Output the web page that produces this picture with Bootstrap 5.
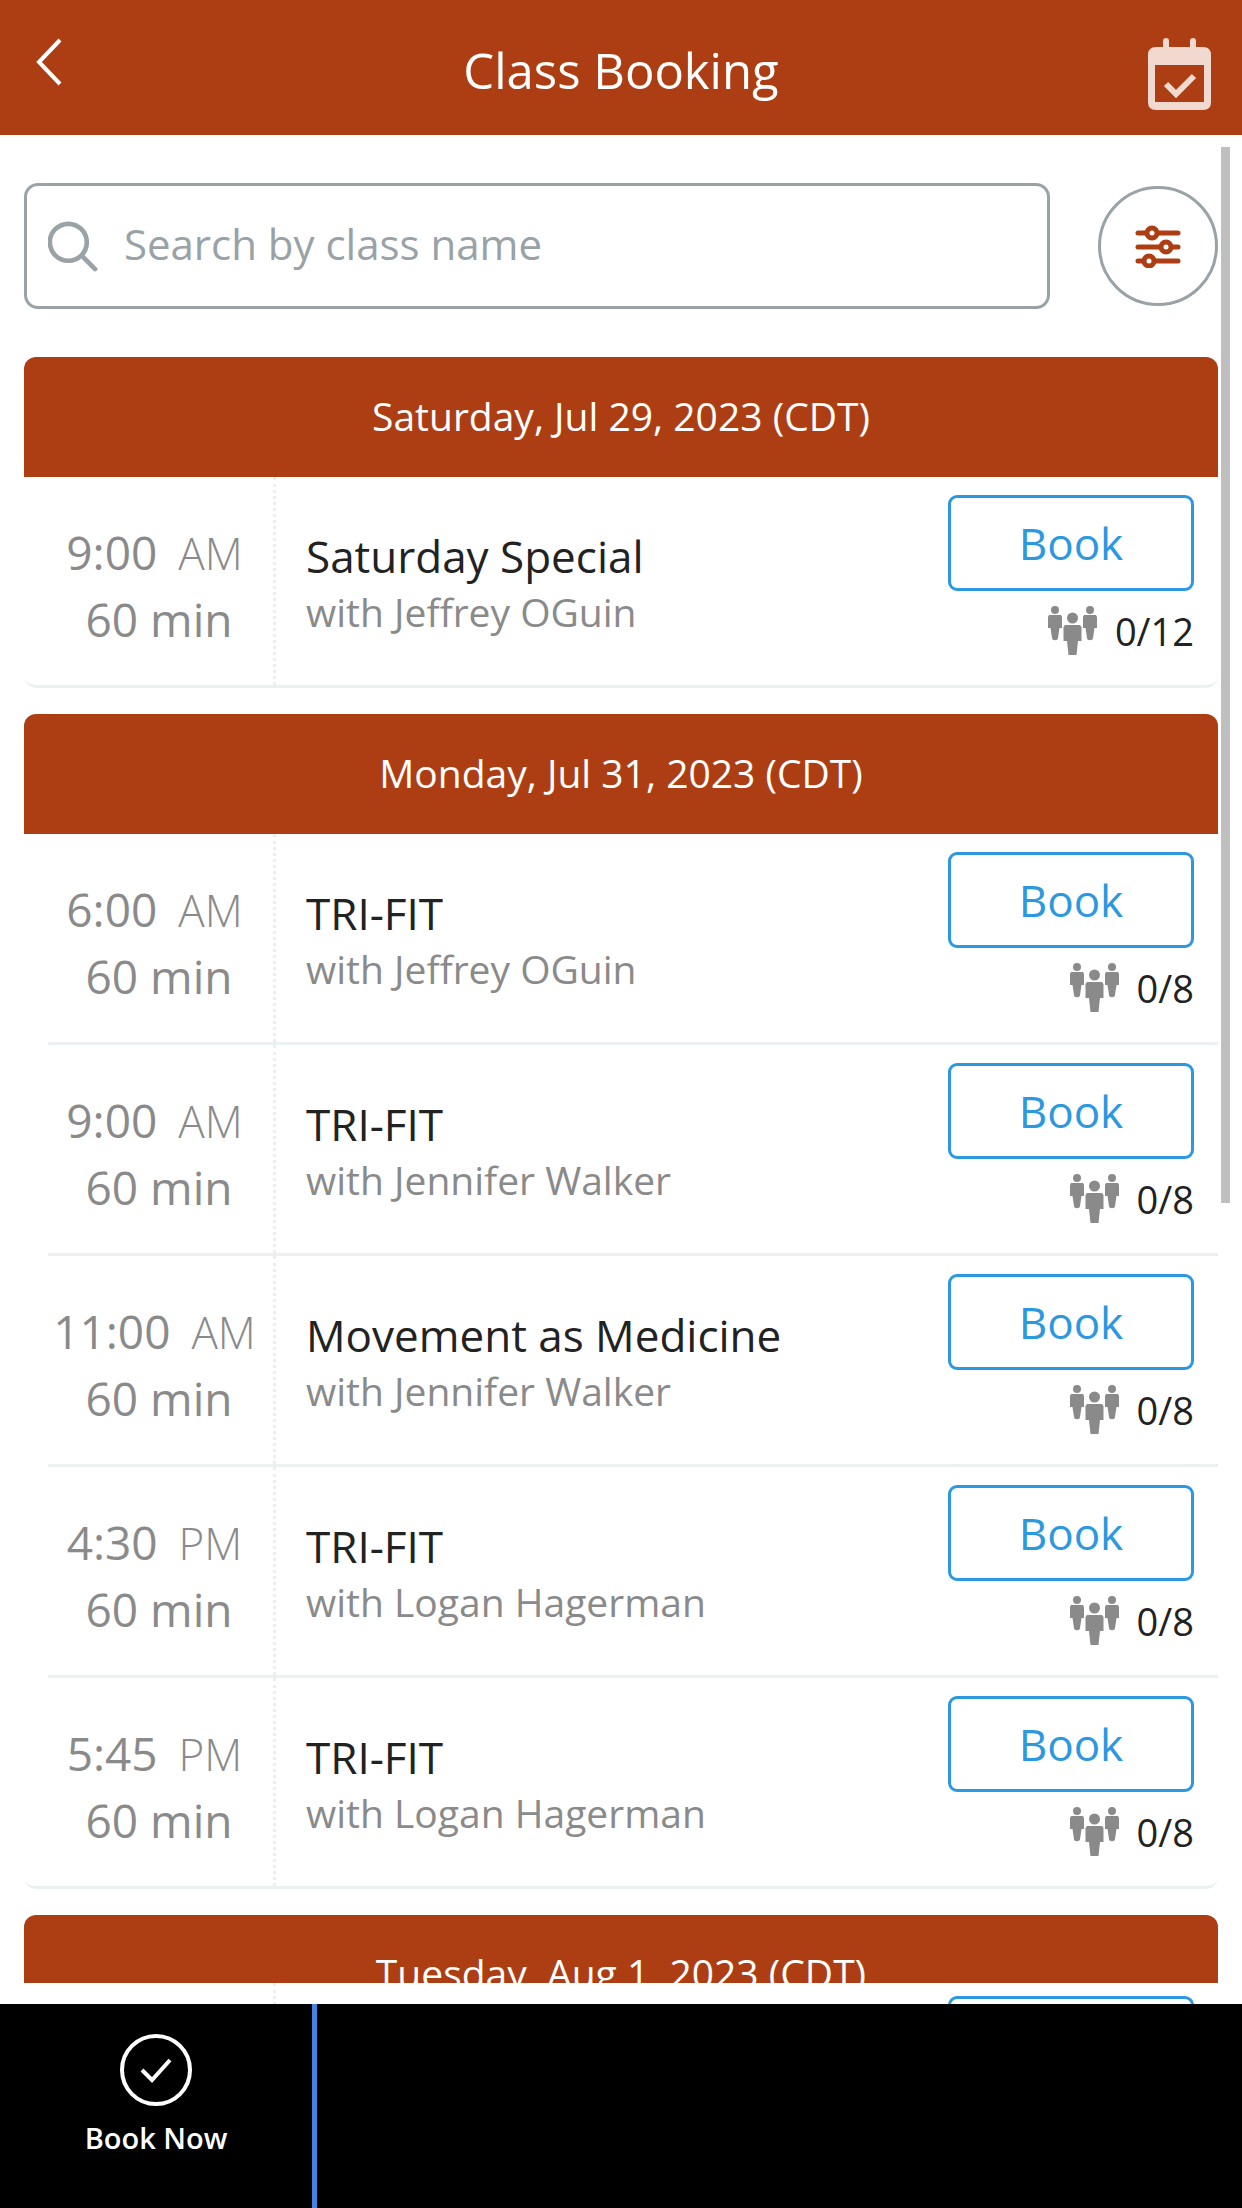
<!DOCTYPE html>
<html lang="en">
<head>
<meta charset="utf-8">
<meta name="viewport" content="width=device-width, initial-scale=1">
<title>Class Booking</title>
<link href="https://cdn.jsdelivr.net/npm/bootstrap@5.3.0/dist/css/bootstrap.min.css" rel="stylesheet">
<style>
  :root { --brand: #ad3e14; --slate: #98a2a7; --line: #ebf0f0; --sky: #2b98e0; }
  body { font-family: "Open Sans", sans-serif; color: #222; }
  svg { display: block; }
  .topbar { height: 135px; background: var(--brand); padding: 4px 30px 0; }
  .topbar h1 { font-size: 49px; line-height: 64px; font-weight: 400; }
  .side { width: 64px; height: 76px; margin-top: 8px; }
  .schedule { padding: 48px 24px 0; }
  .searchbar { gap: 48px; margin-bottom: 48px; }
  .searchbox { height: 126px; border: 3px solid var(--slate); border-radius: 14px; padding-left: 21px; gap: 26px; }
  .searchbox .form-control { font-size: 42px; line-height: 56px; font-weight: 500; color: #444; margin-bottom: 4px; }
  .searchbox .form-control::placeholder { color: var(--slate); opacity: 1; }
  .searchbox .form-control:focus { box-shadow: none; }
  .filter { width: 120px; height: 120px; border: 3px solid var(--slate); background: #fff; }
  .day { margin-bottom: 26px; border-radius: 12px; overflow: hidden; }
  .day h2 { height: 120px; background: var(--brand); font-size: 39px; line-height: 54px; font-weight: 400; padding-bottom: 2px; }
  .slot-item { height: 211px; padding-left: 24px; }
  .slot { border-bottom: 3px solid var(--line); height: 100%; }
  .slot-item:last-child { padding-left: 0; border-bottom: 3px solid var(--line); border-radius: 0 0 12px 12px; }
  .slot-item:last-child .slot { border-bottom: 0; padding-left: 24px; }
  .when { width: 228px; padding: 8px 12px 0 0; border-right: 3px dotted #eceeee; color: #8a8a8a; font-size: 46px; line-height: 66px; }
  .when .ampm { font-size: 44px; font-weight: 300; margin-left: 9px; }
  .length { padding-left: 9px; }
  .what { padding-left: 30px; padding-top: 3px; }
  .what h3 { font-size: 44px; line-height: 58px; font-weight: 400; }
  .what p { font-size: 39px; line-height: 54px; color: #8a8a8a; }
  .seats { width: 246px; margin-right: 24px; padding-top: 18px; }
  .btn-book { height: 96px; border: 3px solid var(--sky); border-radius: 9px; color: var(--sky); font-size: 44px; line-height: 60px; background: #fff; }
  .taken { gap: 18px; margin-top: 12px; font-size: 38px; line-height: 56px; }
  .day.partial h2 { height: 68px; padding-top: 31px; overflow: hidden; }
  .day.partial .seats { padding-top: 13px; }
  .thumb { top: 12px; right: 12px; width: 9px; height: 56.5%; background: #bfbfbf; }
  .tabs { height: 204px; background: #000; }
  .tab-item { width: 317px; border-right: 5px solid #4285dc; font-size: 29px; line-height: 38px; font-weight: 600; padding-top: 29px; gap: 12px; }
</style>
<script src="https://cdn.jsdelivr.net/npm/bootstrap@5.3.0/dist/js/bootstrap.bundle.min.js"></script>
</head>
<body class="bg-white">
<svg class="d-none" aria-hidden="true">
  <symbol id="people" viewBox="0 0 49 50">
    <g fill="#8a8a8a">
      <circle cx="7" cy="4" r="4"/><path d="M1 9h12l1 2v11h-2.500l-1.500 10c0 3-6 3-6 0L2.500 22H0V11z"/>
      <circle cx="42" cy="4" r="4"/><path d="M36 9h12l1 2v11h-2.500l-1.500 10c0 3-6 3-6 0l-1.500-10H35V11z"/>
      <circle cx="24.500" cy="12" r="5.500"/><path d="M17 19h15l1.500 2v14H30l-1.500 14h-8L19 35h-3.500V21z"/>
    </g>
  </symbol>
</svg>
<div class="d-flex flex-column vh-100 overflow-hidden">
  <header class="topbar d-flex align-items-center justify-content-between text-white flex-shrink-0">
    <a href="#" class="side text-white" aria-label="Back">
      <svg width="40" height="60" viewBox="0 0 40 60" fill="none" stroke="#fff" stroke-width="4"><path d="M30 4 9 26l21 22"/></svg>
    </a>
    <h1 class="m-0">Class Booking</h1>
    <a href="#" class="side" aria-label="My bookings">
      <svg width="64" height="76" viewBox="0 0 64 76"><g fill="#f1d9d0"><rect x="15" y="2" width="6" height="16" rx="3"/><rect x="42" y="2" width="6" height="16" rx="3"/><path fill-rule="evenodd" d="M8 11h47q8 0 8 8v47q0 8-8 8H8q-8 0-8-8V19q0-8 8-8zM7 29v37h49V29z"/></g><path d="m18 48 10 10 18-18" fill="none" stroke="#f1d9d0" stroke-width="6"/></svg>
    </a>
  </header>

  <main class="flex-fill position-relative overflow-hidden">
    <div class="schedule">
      <form class="searchbar d-flex align-items-center">
        <label class="searchbox d-flex align-items-center flex-fill">
          <svg width="54" height="54" viewBox="0 0 54 54" fill="none" stroke="#98a2a7" stroke-width="5" stroke-linecap="round"><circle cx="22" cy="23" r="20"/><path d="m37 38 14 14"/></svg>
          <input type="search" class="form-control border-0 p-0 bg-transparent" placeholder="Search by class name" aria-label="Search by class name">
        </label>
        <button type="button" class="filter rounded-circle d-flex align-items-center justify-content-center p-0 flex-shrink-0" aria-label="Filter">
          <svg width="46" height="44" viewBox="0 0 46 44" stroke="#ad3e14" stroke-width="5" stroke-linecap="round"><path d="M3 9h40M3 23h40M3 37h40"/><g fill="#fff"><circle cx="17" cy="9" r="5"/><circle cx="31" cy="23" r="5"/><circle cx="14" cy="37" r="5"/></g></svg>
        </button>
      </form>

      <section class="day">
        <h2 class="d-flex align-items-center justify-content-center text-white m-0">Saturday, Jul 29, 2023 (CDT)</h2>
        <ul class="list-unstyled m-0">
          <li class="slot-item"><div class="slot d-flex">
            <div class="when d-flex flex-column justify-content-center text-center"><div>9:00 <span class="ampm">AM</span></div><div class="length">60 min</div></div>
            <div class="what flex-fill align-self-center"><h3 class="m-0">Saturday Special</h3><p class="m-0">with Jeffrey OGuin</p></div>
            <div class="seats"><button type="button" class="btn btn-book w-100 py-0">Book</button><div class="taken d-flex align-items-center justify-content-end"><svg width="49" height="50"><use href="#people"/></svg>0/12</div></div>
          </div></li>
        </ul>
      </section>

      <section class="day">
        <h2 class="d-flex align-items-center justify-content-center text-white m-0">Monday, Jul 31, 2023 (CDT)</h2>
        <ul class="list-unstyled m-0">
          <li class="slot-item"><div class="slot d-flex">
            <div class="when d-flex flex-column justify-content-center text-center"><div>6:00 <span class="ampm">AM</span></div><div class="length">60 min</div></div>
            <div class="what flex-fill align-self-center"><h3 class="m-0">TRI-FIT</h3><p class="m-0">with Jeffrey OGuin</p></div>
            <div class="seats"><button type="button" class="btn btn-book w-100 py-0">Book</button><div class="taken d-flex align-items-center justify-content-end"><svg width="49" height="50"><use href="#people"/></svg>0/8</div></div>
          </div></li>
          <li class="slot-item"><div class="slot d-flex">
            <div class="when d-flex flex-column justify-content-center text-center"><div>9:00 <span class="ampm">AM</span></div><div class="length">60 min</div></div>
            <div class="what flex-fill align-self-center"><h3 class="m-0">TRI-FIT</h3><p class="m-0">with Jennifer Walker</p></div>
            <div class="seats"><button type="button" class="btn btn-book w-100 py-0">Book</button><div class="taken d-flex align-items-center justify-content-end"><svg width="49" height="50"><use href="#people"/></svg>0/8</div></div>
          </div></li>
          <li class="slot-item"><div class="slot d-flex">
            <div class="when d-flex flex-column justify-content-center text-center"><div>11:00 <span class="ampm">AM</span></div><div class="length">60 min</div></div>
            <div class="what flex-fill align-self-center"><h3 class="m-0">Movement as Medicine</h3><p class="m-0">with Jennifer Walker</p></div>
            <div class="seats"><button type="button" class="btn btn-book w-100 py-0">Book</button><div class="taken d-flex align-items-center justify-content-end"><svg width="49" height="50"><use href="#people"/></svg>0/8</div></div>
          </div></li>
          <li class="slot-item"><div class="slot d-flex">
            <div class="when d-flex flex-column justify-content-center text-center"><div>4:30 <span class="ampm">PM</span></div><div class="length">60 min</div></div>
            <div class="what flex-fill align-self-center"><h3 class="m-0">TRI-FIT</h3><p class="m-0">with Logan Hagerman</p></div>
            <div class="seats"><button type="button" class="btn btn-book w-100 py-0">Book</button><div class="taken d-flex align-items-center justify-content-end"><svg width="49" height="50"><use href="#people"/></svg>0/8</div></div>
          </div></li>
          <li class="slot-item"><div class="slot d-flex">
            <div class="when d-flex flex-column justify-content-center text-center"><div>5:45 <span class="ampm">PM</span></div><div class="length">60 min</div></div>
            <div class="what flex-fill align-self-center"><h3 class="m-0">TRI-FIT</h3><p class="m-0">with Logan Hagerman</p></div>
            <div class="seats"><button type="button" class="btn btn-book w-100 py-0">Book</button><div class="taken d-flex align-items-center justify-content-end"><svg width="49" height="50"><use href="#people"/></svg>0/8</div></div>
          </div></li>
        </ul>
      </section>

      <section class="day partial">
        <h2 class="text-center text-white m-0">Tuesday, Aug 1, 2023 (CDT)</h2>
        <ul class="list-unstyled m-0">
          <li class="slot-item"><div class="slot d-flex">
            <div class="when"></div>
            <div class="what flex-fill"></div>
            <div class="seats"><button type="button" class="btn btn-book w-100 py-0" aria-label="Book"></button></div>
          </div></li>
        </ul>
      </section>
    </div>
    <div class="thumb position-absolute"></div>
  </main>

  <nav class="tabs d-flex flex-shrink-0">
    <a href="#" class="tab-item d-flex flex-column align-items-center text-white text-decoration-none">
      <svg width="74" height="74" viewBox="0 0 74 74" fill="none" stroke="#fff" stroke-width="4"><circle cx="37" cy="37" r="34"/><path d="m23 37 10 10 18-20"/></svg>
      Book Now
    </a>
  </nav>
</div>
</body>
</html>
